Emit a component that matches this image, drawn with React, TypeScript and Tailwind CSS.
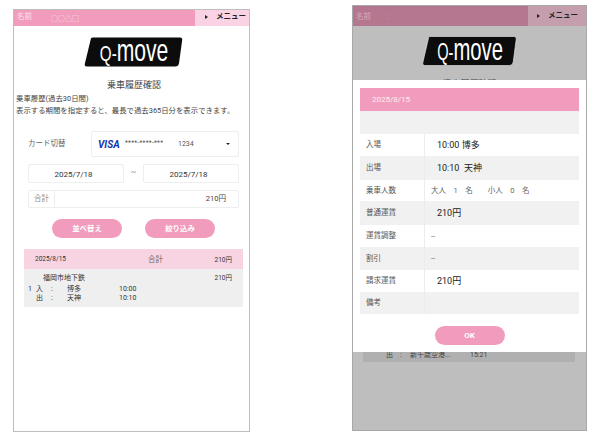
const font = "font-['Roboto','Noto_Sans_CJK_JP',sans-serif]";

function Logo({ edge = false, width = 99 }: { edge?: boolean; width?: number }) {
  return (
    <svg width={width} height="30" viewBox="0 0 100 30" preserveAspectRatio="none" className="block overflow-visible">
      <path
        d="M7 1.5 Q7.6 0.5 9 0.5 L97 0.5 Q99.5 0.5 99.2 3 L96 26 Q95.5 29.5 92 29.5 L3 29.5 Q0.3 29.5 0.8 27 Z"
        fill="#0c0c0c"
        stroke={edge ? "#f2f2f2" : "none"}
        strokeWidth={edge ? 0.6 : 0}
      />
      <text transform="translate(16 24) scale(0.667 1)" fill="#ffffff" fontFamily="'Liberation Sans',sans-serif">
        <tspan fontSize="23">Q-</tspan>
        <tspan fontSize="32">move</tspan>
      </text>
    </svg>
  );
}

function Header({ dim, name }: { dim?: boolean; name: string }) {
  return (
    <div className={`flex shrink-0 ${dim ? "h-[20px] bg-[#b5778f]" : "h-[16px] bg-[#f29cbd]"}`}>
      <div className={`flex flex-1 text-[7.5px] ${dim ? "items-start pt-[5px] pl-[3px] text-[#d9a8bb]" : "items-start pt-[1px] pl-[3px] text-[#f7e3ea]"}`}>
        <span className={dim ? "w-[30px]" : "w-[34px]"}>名前</span>
        <span className={dim ? "" : "mt-[3px] text-[7px]"}>{name}</span>
      </div>
      <div className={`flex items-center gap-[8px] text-[7.5px] font-bold text-[#222] ${dim ? "w-[58px] bg-[#c59eae] pl-[9px]" : "w-[54px] bg-[#f9d3e3] pb-[3px] pl-[10px]"}`}>
        <span className="h-0 w-0 border-y-[2.5px] border-l-[3px] border-y-transparent border-l-[#222]" />
        <span>メニュー</span>
      </div>
    </div>
  );
}

function Left() {
  return (
    <div className="flex h-[423px] w-[237px] shrink-0 flex-col border border-[#bdbdbd] bg-white">
      <Header name="○○△□" />
      <div className="mt-[11px] flex justify-center pl-[3px]">
        <Logo />
      </div>
      <div className="mt-[11px] pl-[5px] text-center text-[9px] leading-[14px] text-[#444]">乗車履歴確認</div>
      <div className="mt-[1px] pl-[2px] text-[7.4px] leading-[11.5px] text-[#444]">
        <div>乗車履歴(過去30日間)</div>
        <div>表示する期間を指定すると、最長で過去365日分を表示できます。</div>
      </div>
      <div className="mt-[15px] flex h-[26px] items-center pr-[10px] pl-[14px]">
        <span className="w-[63px] text-[7.5px] text-[#666]">カード切替</span>
        <div className="flex h-full flex-1 items-center rounded-[2px] border border-[#eeeeee] pr-[8px] pl-[6px] text-[#555]">
          <span className="w-[27px] text-[10px] font-bold text-[#1433b0] italic">VISA</span>
          <span className="w-[53px] text-[6.5px] tracking-[0.3px]">****-****-***</span>
          <span className="flex-1 text-[7px]">1234</span>
          <span className="h-0 w-0 border-x-[2px] border-t-[2.5px] border-x-transparent border-t-[#222]" />
        </div>
      </div>
      <div className="mt-[7px] flex h-[19px] items-center pr-[10px] pl-[14px] text-[8px] text-[#333]">
        <div className="flex h-full w-[96px] items-center justify-center rounded-[2px] border border-[#eeeeee] pt-[2px] pr-[5px]">2025/7/18</div>
        <span className="flex-1 pb-[4px] text-center text-[#888]">~</span>
        <div className="flex h-full w-[96px] items-center justify-center rounded-[2px] border border-[#eeeeee] pt-[2px] pr-[5px]">2025/7/18</div>
      </div>
      <div className="mt-[7px] mr-[10px] ml-[14px] flex h-[18px] items-center rounded-[2px] border border-[#eeeeee] text-[7.5px]">
        <span className="flex h-full w-[26px] items-center justify-center border-r border-[#eeeeee] text-[#888]">合計</span>
        <span className="flex-1 pr-[12px] text-right text-[#444]">210円</span>
      </div>
      <div className="mt-[11px] flex justify-center gap-[23px] pl-[4px] text-[7.4px] font-bold text-white">
        <div className="flex h-[19px] w-[70px] items-center justify-center rounded-full bg-[#f29cbd]">並べ替え</div>
        <div className="flex h-[19px] w-[70px] items-center justify-center rounded-full bg-[#f29cbd]">絞り込み</div>
      </div>
      <div className="mt-[11px] mr-[6px] ml-[10px] text-[#333]">
        <div className="flex h-[20px] bg-[#f8d3e2] text-[6.5px]">
          <span className="w-[121px] pt-[6px] pl-[11px]">2025/8/15</span>
          <span className="flex-1 pt-[5px] pl-[3px] text-[7.5px] text-[#666]">合計</span>
          <span className="pt-[7px] pr-[11px]">210円</span>
        </div>
        <div className="flex h-[38px] bg-[#efefef] text-[7px] leading-[9px]">
          <div className="w-[121px] pt-[5px] pl-[4px]">
            <div className="pl-[15px]">福岡市地下鉄</div>
            <div className="mt-[2px] flex">
              <span className="w-[8px]">1</span>
              <span className="w-[15px]">入</span>
              <span className="w-[16px]">:</span>
              <span className="w-[52px]">博多</span>
              <span>10:00</span>
            </div>
            <div className="flex">
              <span className="w-[8px]" />
              <span className="w-[15px]">出</span>
              <span className="w-[16px]">:</span>
              <span className="w-[52px]">天神</span>
              <span>10:10</span>
            </div>
          </div>
          <div className="flex-1 pt-[5px] pr-[11px] text-right text-[6.5px]">210円</div>
        </div>
      </div>
    </div>
  );
}

const rows: [string, string, string][] = [
  ["入場", "10:00 博多", "big"],
  ["出場", "10:10  天神", "big"],
  ["乗車人数", "大人　1　名　　小人　0　名", "small"],
  ["普通運賃", "210円", "big"],
  ["運賃調整", "--", "small"],
  ["割引", "--", "small"],
  ["請求運賃", "210円", "big"],
  ["備考", "", "small"],
];
const heights = ["h-[22px]", "h-[24px]", "h-[21px]", "h-[24px]", "h-[22px]", "h-[23px]", "h-[22px]", "h-[22px]"];

function Right() {
  return (
    <div className="relative h-[426px] w-[235px] shrink-0 overflow-hidden border border-[#a8a8a8] bg-[#bebebe]">
      <Header dim name=":" />
      <div className="mt-[10px] flex justify-center">
        <Logo edge width={95} />
      </div>
      <div className="mt-[11px] text-center text-[9px] leading-[14px] text-[#444]">乗車履歴確認</div>
      <div className="mt-[257px] mr-[11px] ml-[10px] flex h-[14px] items-end bg-[#b0b0b0] pb-[2px] pl-[23px] text-[7px] text-[#444]">
        <span className="w-[14px]">出</span>
        <span className="w-[10px]">:</span>
        <span className="w-[60px]">新千歳空港...</span>
        <span>15:21</span>
      </div>
      <div className="absolute top-[74px] right-0 left-0 flex h-[272px] flex-col bg-white px-[7px] pt-[8px]">
        <div className="flex h-[23px] shrink-0 items-center bg-[#f29cbd] pl-[12px] text-[8px] text-[#fbeef3]">2025/8/15</div>
        <div className="h-[23px] shrink-0 bg-[#f1f1f1]" />
        {rows.map(([label, value, size], i) => (
          <div key={label} className={`flex shrink-0 items-center ${heights[i]} ${i % 2 === 1 ? "bg-[#f1f1f1]" : "bg-white"}`}>
            <div className="flex h-full w-[65px] items-center border-r border-[#ececec] pl-[6px] text-[7.5px] text-[#555]">{label}</div>
            <div className={size === "big" ? "pt-[1px] pl-[12px] text-[9px] whitespace-pre text-[#222]" : "pt-[1px] pl-[6px] text-[7.5px] whitespace-pre text-[#666]"}>{value}</div>
          </div>
        ))}
        <div className="mt-[12px] flex justify-center">
          <div className="flex h-[19px] w-[70px] items-center justify-center rounded-full bg-[#f29cbd] text-[8px] font-bold text-white">OK</div>
        </div>
      </div>
    </div>
  );
}

export default function App() {
  return (
    <div className={`relative flex h-[437px] w-[600px] items-start gap-[102px] overflow-hidden bg-white pl-[13px] ${font}`}>
      <div className="pt-[9px]">
        <Left />
      </div>
      <div className="pt-[5px]">
        <Right />
      </div>
    </div>
  );
}
